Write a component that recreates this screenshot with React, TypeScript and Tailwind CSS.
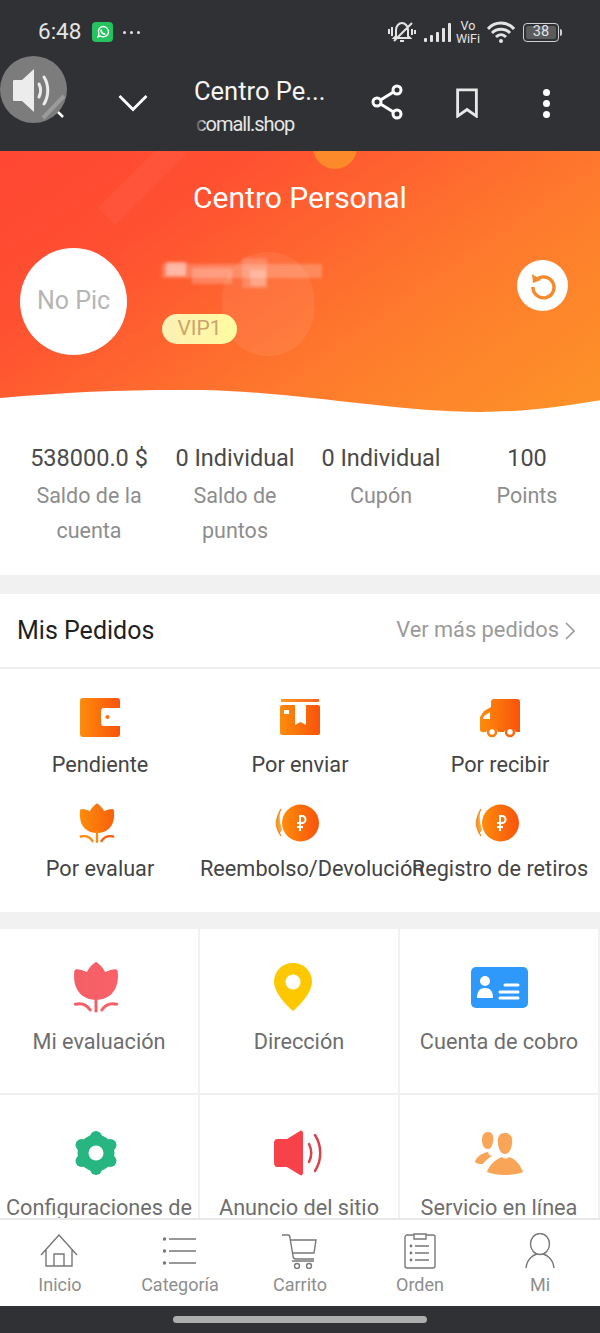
import React from "react";

const font = { fontFamily: "Roboto, 'Liberation Sans', sans-serif" };

function Grad({ id }: { id: string }) {
  return (
    <defs>
      <linearGradient id={id} x1="0" y1="0" x2="1" y2="0">
        <stop offset="0" stopColor="#fd8c0c" />
        <stop offset="1" stopColor="#f9530b" />
      </linearGradient>
    </defs>
  );
}

const TULIP = "M20 0 C23 2 26 5 28 9 C31 7.5 34 6.5 37 6.5 C38.5 6.5 39 8 39 10 C39.5 18 37.5 24 33.5 28 C30 31.5 25 33 20 33 C15 33 10 31.5 6.5 28 C2.5 24 0.5 18 1 10 C1 8 1.5 6.5 3 6.5 C6 6.5 9 7.5 12 9 C14 5 17 2 20 0 Z";

function Wallet() {
  return (
    <svg viewBox="0 0 40 40" className="w-10 h-10">
      <Grad id="g1" />
      <path fill="url(#g1)" d="M3 0 H37 a3 3 0 0 1 3 3 V10 H24 a3 3 0 0 0 -3 3 V25 a3 3 0 0 0 3 3 H40 V36 a3 3 0 0 1 -3 3 H3 a3 3 0 0 1 -3 -3 V3 a3 3 0 0 1 3 -3 Z" />
      <circle cx="27.5" cy="19" r="2" fill="#f9700b" />
    </svg>
  );
}

function Box() {
  return (
    <svg viewBox="0 0 40 40" className="w-10 h-10">
      <Grad id="g2" />
      <path fill="url(#g2)" d="M1 1 H39 V4 H1 Z" opacity="0.9" />
      <path fill="url(#g2)" fillRule="evenodd" d="M2 7 H15 V27 L20.5 24 L26 27 V7 H38 a2 2 0 0 1 2 2 V35 a2 2 0 0 1 -2 2 H2 a2 2 0 0 1 -2 -2 V9 a2 2 0 0 1 2 -2 Z M4 12 V16 H9 V12 Z" />
    </svg>
  );
}

function Truck() {
  return (
    <svg viewBox="0 0 40 40" className="w-10 h-10">
      <Grad id="g3" />
      <path fill="url(#g3)" fillRule="evenodd" d="M14 1 H37 a3 3 0 0 1 3 3 V34 H36 a6.5 6.5 0 0 0 -12 0 H18 a6.5 6.5 0 0 0 -12 0 H2 a2 2 0 0 1 -2 -2 V19 L4 13 L11 9 V4 a3 3 0 0 1 3 -3 Z M4 18 L3 21 H10 V14 Z" />
      <circle cx="12" cy="34" r="4" fill="none" stroke="#fb7d0b" strokeWidth="2.5" />
      <circle cx="30" cy="34" r="4" fill="none" stroke="#fa660b" strokeWidth="2.5" />
    </svg>
  );
}

function Tulip({ id, a, b }: { id: string; a: string; b: string }) {
  return (
    <svg viewBox="0 0 40 44" className="w-full h-full">
      <defs>
        <linearGradient id={id} x1="0" y1="0" x2="1" y2="0">
          <stop offset="0" stopColor={a} />
          <stop offset="1" stopColor={b} />
        </linearGradient>
      </defs>
      <path fill={`url(#${id})`} d={TULIP} />
      <path fill={a} d="M18.7 30 H21.3 V44 H18.7 Z" />
      <path fill="none" stroke={a} strokeWidth="2.6" strokeLinecap="round" d="M2 37 C8 35.5 12 37.5 15 42" />
      <path fill="none" stroke={b} strokeWidth="2.6" strokeLinecap="round" d="M38 37 C32 35.5 28 37.5 25 42" />
    </svg>
  );
}

function Coin({ id }: { id: string }) {
  return (
    <svg viewBox="0 0 50 40" className="w-[50px] h-10">
      <Grad id={id} />
      <path d="M5 8 C1 14 0 20 1 24 L4 31 L7 27 C5 21 4 14 5 8 Z" fill="#f5a33b" />
      <path d="M6 6 C1 15 1 25 6 33" fill="none" stroke="#f68c1c" strokeWidth="1.4" />
      <circle cx="25.5" cy="20" r="18.5" fill={`url(#${id})`} />
      <path fill="none" stroke="#fff" strokeWidth="2" d="M25 28 V13 H27 a3.2 3.2 0 0 1 0 7 H22 M22 24 H28" />
    </svg>
  );
}

function Pin() {
  return (
    <svg viewBox="0 0 38 48" className="w-[38px] h-[48px]">
      <path fill="#fdc800" fillRule="evenodd" d="M19 0 C30 0 38 8 38 19 C38 29 27 41 19 48 C11 41 0 29 0 19 C0 8 8 0 19 0 Z M19 11.5 a7.5 7.5 0 1 0 0.01 0 Z" />
    </svg>
  );
}

function IdCard() {
  return (
    <svg viewBox="0 0 57 41" className="w-[57px] h-[41px]">
      <rect width="57" height="41" rx="5" fill="#2f98fb" />
      <circle cx="14" cy="14" r="5" fill="#fff" />
      <path fill="#fff" d="M6 31 C6 24 9 21 14 21 C19 21 22 24 22 31 Z" />
      <path fill="none" stroke="#fff" strokeWidth="3" strokeLinecap="round" d="M34 18 H47 M29 25 H47 M29 31 H47" />
    </svg>
  );
}

function Gear() {
  return (
    <svg viewBox="0 0 44 44" className="w-11 h-11" fill="#27b681">
      <circle cx="22" cy="22" r="18.5" />
      <circle cx="22" cy="6" r="6" />
      <circle cx="22" cy="38" r="6" />
      <circle cx="7.5" cy="14" r="6" />
      <circle cx="36.5" cy="14" r="6" />
      <circle cx="7.5" cy="30" r="6" />
      <circle cx="36.5" cy="30" r="6" />
      <circle cx="22" cy="22" r="7.5" fill="#fff" />
    </svg>
  );
}

function Speaker() {
  return (
    <svg viewBox="0 0 52 46" className="w-[52px] h-[46px]">
      <path fill="#f7424a" d="M4 9 H14 L27 1 C28 0 30 1 30 3 V43 C30 45 28 46 27 45 L14 37 H4 C2 37 1 35 1 33 V13 C1 11 2 9 4 9 Z" />
      <path fill="none" stroke="#d8444c" strokeWidth="2.5" strokeLinecap="round" d="M36 14 C39 20 39 26 36 32" />
      <path fill="none" stroke="#d8444c" strokeWidth="2.5" strokeLinecap="round" d="M42 5 C49 16 49 30 42 41" />
    </svg>
  );
}

function People() {
  return (
    <svg viewBox="0 0 50 44" className="w-[50px] h-[44px]">
      <path fill="#f9a557" d="M14 1 C19 1 20 6 19 11 C18 15 17 18 14 18 C11 18 8 15 8 9 C8 4 10 1 14 1 Z M1 31 C2 26 8 22 14 21 C15 24 16 25 18 25 C13 28 10 31 9 33 C6 33 3 33 1 31 Z" />
      <path fill="#f9a557" d="M31 2 C37 2 39 7 38 13 C37 19 35 23 31 23 C27 23 25 19 24 13 C23 7 25 2 31 2 Z M13 41 C15 34 22 28 28 26 C30 28 33 28 35 26 C42 28 47 35 49 41 C40 45 22 45 13 41 Z" />
    </svg>
  );
}

const navStroke = { fill: "none", stroke: "#777", strokeWidth: 1.4 };

const navIcons = [
  <svg key="h" viewBox="0 0 38 34" className="w-[38px] h-[34px] mr-[3px]" {...navStroke}>
    <path d="M1 21 L19 1 L37 21 M6 16 V32 H32 V16 M14 32 V20 H24 V32" />
  </svg>,
  <svg key="c" viewBox="0 0 34 30" className="w-[34px] h-[30px]" {...navStroke}>
    <path d="M6 3 H33 M6 15 H33 M6 27 H33" />
    <circle cx="1.5" cy="3" r="1" fill="#777" />
    <circle cx="1.5" cy="15" r="1" fill="#777" />
    <circle cx="1.5" cy="27" r="1" fill="#777" />
  </svg>,
  <svg key="k" viewBox="0 0 36 36" className="w-[36px] h-[36px] mr-[3px]" {...navStroke}>
    <path d="M1 2 H7 C8 2 9 3 9 5 L12 23 C12 25 13 26 15 26 H33 M9 7 H35 L33 20 L12 20 M11 28 H33" />
    <circle cx="16" cy="33" r="2.5" />
    <circle cx="28" cy="33" r="2.5" />
  </svg>,
  <svg key="o" viewBox="0 0 32 36" className="w-[32px] h-[36px]" {...navStroke}>
    <path d="M10 2 H3 C2 2 1 3 1 4 V33 C1 34 2 35 3 35 H29 C30 35 31 34 31 33 V4 C31 3 30 2 29 2 H22 M10 1 H22 V6 H10 Z M11 13 H25 M11 20 H25 M11 27 H25" />
    <circle cx="7" cy="13" r="0.7" fill="#777" />
    <circle cx="7" cy="20" r="0.7" fill="#777" />
    <circle cx="7" cy="27" r="0.7" fill="#777" />
  </svg>,
  <svg key="m" viewBox="0 0 30 36" className="w-[30px] h-[36px]" {...navStroke}>
    <ellipse cx="15" cy="11" rx="9.5" ry="10.5" />
    <path d="M1 35 C2 26 8 22 12 21 M29 35 C28 26 22 22 18 21" />
  </svg>,
];

const stats = [
  ["538000.0 $", "Saldo de la cuenta"],
  ["0 Individual", "Saldo de puntos"],
  ["0 Individual", "Cupón"],
  ["100", "Points"],
];

const orders: [React.ReactNode, string][] = [
  [<Wallet key="1" />, "Pendiente"],
  [<Box key="2" />, "Por enviar"],
  [<Truck key="3" />, "Por recibir"],
  [<div key="4" className="w-[36px] h-10 mr-[6px]"><Tulip id="t1" a="#fd8c0c" b="#f9600b" /></div>, "Por evaluar"],
  [<Coin key="5" id="c1" />, "Reembolso/Devolución"],
  [<Coin key="6" id="c2" />, "Registro de retiros"],
];

const tools: [React.ReactNode, string][] = [
  [<div key="1" className="w-[46px] h-[52px] mr-[6px]"><Tulip id="t2" a="#f35f66" b="#fb6068" /></div>, "Mi evaluación"],
  [<div key="2" className="mr-[12px]"><Pin /></div>, "Dirección"],
  [<IdCard key="3" />, "Cuenta de cobro"],
  [<div key="4" className="mr-[6px]"><Gear /></div>, "Configuraciones de"],
  [<Speaker key="5" />, "Anuncio del sitio"],
  [<People key="6" />, "Servicio en línea"],
];

const nav = ["Inicio", "Categoría", "Carrito", "Orden", "Mi"];

export default function App() {
  return (
    <div style={font} className="relative w-[600px] h-[1333px] flex flex-col overflow-hidden bg-white">
      {/* status bar */}
      <div className="h-[52px] shrink-0 bg-[#303134] flex items-center justify-between pl-[38px] pr-[38px] pt-[12px] text-[#e4e4e4]">
        <div className="flex items-center">
          <span className="text-[22.5px] w-[54px]">6:48</span>
          <span className="w-[21px] h-[20px] rounded-[4px] bg-[#25c25f] flex items-center justify-center">
            <svg viewBox="0 0 14 14" className="w-[14px] h-[14px]" fill="none" stroke="#fff" strokeWidth="1.3">
              <path d="M2 12 L3 9 C1 5 4 1.5 7 1.5 C10 1.5 12.5 4 12.5 7 C12.5 10.5 8 13 4.5 11 Z" />
              <path d="M5 4.5 C5 7 7 9 9.5 9.3" strokeWidth="1.6" />
            </svg>
          </span>
          <span className="flex gap-[4px] ml-[10px]">
            <i className="w-[3px] h-[3px] rounded-full bg-[#e4e4e4]" />
            <i className="w-[3px] h-[3px] rounded-full bg-[#e4e4e4]" />
            <i className="w-[3px] h-[3px] rounded-full bg-[#e4e4e4]" />
          </span>
        </div>
        <div className="flex items-center">
          <svg viewBox="0 0 28 26" className="w-[28px] h-[26px]" fill="none" stroke="#e4e4e4" strokeWidth="2">
            <path d="M8 17 V11 C8 7 11 4 14 4 C17 4 20 7 20 11 V17 L22 19 H6 Z M12 22 H16 M24 4 L6 22 M1 10 V15 M4 8 V17 M24 10 V16 M27 11 V15" />
          </svg>
          <svg viewBox="0 0 28 20" className="w-[28px] h-[20px] ml-[8px]" fill="#e4e4e4">
            <rect x="0" y="16" width="3" height="4" rx="1" />
            <rect x="6" y="13" width="3" height="7" rx="1" />
            <rect x="12" y="10" width="3" height="10" rx="1" />
            <rect x="18" y="6" width="3" height="14" rx="1" />
            <rect x="24" y="1" width="3" height="19" rx="1" />
          </svg>
          <span className="ml-[2px] w-[28px] flex flex-col items-center text-[12.5px] leading-[11px] gap-[2px]">
            <span>Vo</span>
            <span>WiFi</span>
          </span>
          <svg viewBox="0 0 28 24" className="w-[28px] h-[24px] ml-[5px]" fill="none" stroke="#e4e4e4" strokeWidth="3">
            <path d="M1 9 C8 1 20 1 27 9 M5 13 C10 8 18 8 23 13 M9 17 C12 14 16 14 19 17" />
            <circle cx="14" cy="21" r="2" fill="#e4e4e4" stroke="none" />
          </svg>
          <span className="ml-[8px] w-[36px] h-[19px] rounded-[4px] border border-[#cfcfcf] flex items-center justify-center p-[2px]">
            <span className="bg-[#5a5b5d] rounded-[2px] w-full h-full flex items-center justify-center text-[14.5px] leading-none">38</span>
          </span>
          <i className="w-[2px] h-[7px] ml-[1px] rounded-r bg-[#cfcfcf]" />
        </div>
      </div>

      {/* browser bar */}
      <div className="relative h-[99px] shrink-0 bg-[#303134] flex items-center text-white">
        <svg viewBox="0 0 30 18" className="absolute left-[118px] top-[42px] w-[30px] h-[18px]" fill="none" stroke="#fff" strokeWidth="2.8">
          <path d="M1.5 2 L15 15.5 L28.5 2" />
        </svg>
        <svg viewBox="0 0 14 14" className="absolute left-[50px] top-[52px] w-[14px] h-[14px]" fill="none" stroke="#fff" strokeWidth="2.5">
          <path d="M1 1 L13 13" />
        </svg>
        <div className="absolute left-[194px] top-[20px] flex flex-col">
          <span className="text-[25.5px] leading-[38px] text-[#f5f5f5]">Centro Pe...</span>
          <span className="relative text-[20px] leading-[30px] tracking-[-1px] pl-[2px] text-[#e6e6e6] -mt-[1px]">
            comall.shop
            <i className="absolute left-0 top-0 w-[12px] h-full bg-gradient-to-r from-[#303134] to-transparent" />
          </span>
        </div>
        <svg viewBox="0 0 32 36" className="absolute left-[371px] top-[32px] w-[32px] h-[36px]" fill="none" stroke="#fff" strokeWidth="3">
          <circle cx="26" cy="6" r="4" />
          <circle cx="26" cy="30" r="4" />
          <circle cx="6" cy="18" r="4" />
          <path d="M9.5 16 L22.5 8 M9.5 20 L22.5 28" />
        </svg>
        <svg viewBox="0 0 24 32" className="absolute left-[455px] top-[36px] w-[24px] h-[30px]" fill="none" stroke="#e8e8e8" strokeWidth="3">
          <path d="M2 2 H22 V30 L12 23 L2 30 Z" />
        </svg>
        <div className="absolute left-[543px] top-[37px] flex flex-col gap-[4px]">
          <i className="w-[7px] h-[7px] rounded-full bg-white" />
          <i className="w-[7px] h-[7px] rounded-full bg-white" />
          <i className="w-[7px] h-[7px] rounded-full bg-white" />
        </div>
      </div>

      {/* floating volume bubble */}
      <div className="absolute left-0 top-[56px] w-[67px] h-[67px] rounded-full bg-[#7c7c7d] flex items-center justify-center">
        <svg viewBox="0 0 67 67" className="w-[67px] h-[67px]">
          <path fill="#ececec" d="M14 24 H22 L34 13 V56 L22 45 H14 C13 45 13 44 13 43 V26 C13 25 13 24 14 24 Z" />
          <path fill="none" stroke="#ececec" strokeWidth="3" strokeLinecap="round" d="M39 28 C41 32 41 37 39 41 M44 21 C49 29 49 40 44 48" />
          <path fill="none" stroke="#9a9a9a" strokeWidth="4" d="M43 62 L64 40" />
        </svg>
      </div>

      <div className="flex-1 min-h-0 overflow-hidden">
        {/* hero */}
        <div className="relative h-[262px] overflow-hidden bg-[linear-gradient(145deg,#ff4733_0%,#ff4f31_25%,#fe7a2d_65%,#fd9028_95%)]">
          <i className="absolute left-[313px] top-[-26px] w-[44px] h-[44px] rounded-full bg-[#fd8a2a]" />
          <i className="absolute left-[222px] top-[101px] w-[92px] h-[104px] rounded-full bg-white/[.07]" />
          <i className="absolute left-[130px] top-[-20px] w-[24px] h-[100px] rotate-[45deg] bg-white/[.04]" />
          <svg viewBox="0 0 600 60" preserveAspectRatio="none" className="absolute left-0 bottom-0 w-[600px] h-[32px]">
            <path fill="#fff" d="M0 32 C70 20 130 16 200 17 C300 20 390 58 480 58 C530 58 570 45 600 36 V60 H0 Z" />
          </svg>
          <div className="relative text-center text-white text-[30px] leading-[40px] pt-[27px]">Centro Personal</div>
          <div className="absolute left-[20px] top-[97px] w-[107px] h-[107px] rounded-full bg-white flex items-center justify-center text-[#b5b5b5] text-[25px] pb-[2px]">No Pic</div>
          <svg viewBox="0 0 160 36" className="absolute left-[162px] top-[105px] w-[160px] h-[36px] blur-[1.5px]">
            <rect x="0" y="8" width="160" height="14" fill="#fff" opacity=".22" />
            <rect x="4" y="6" width="20" height="14" fill="#fff" opacity=".45" />
            <rect x="30" y="12" width="40" height="16" fill="#fff" opacity=".22" />
            <rect x="80" y="2" width="25" height="30" fill="#fff" opacity=".18" />
            <rect x="88" y="14" width="16" height="16" fill="#fff" opacity=".25" />
          </svg>
          <div className="absolute left-[162px] top-[163px] w-[75px] h-[30px] rounded-full bg-gradient-to-r from-[#fdf0b4] to-[#fffba0] flex items-center justify-center text-[#cea36a] text-[21px]">VIP1</div>
          <div className="absolute left-[517px] top-[109px] w-[51px] h-[51px] rounded-full bg-white flex items-center justify-center">
            <svg viewBox="0 0 28 28" className="w-[28px] h-[28px]" fill="none" stroke="#f58a2c" strokeWidth="3.4">
              <path d="M7 8 A10.5 10.5 0 1 1 4 15" />
              <path d="M3 2 L4 11 L12 8" fill="#f58a2c" stroke="none" />
            </svg>
          </div>
        </div>

        {/* stats */}
        <div className="h-[162px] pl-4 grid grid-cols-4 w-[600px]">
          {stats.map(([v, l], i) => (
            <div key={i} className="w-[146px] text-center pt-[28px] px-3">
              <div className="text-[23.5px] leading-[34px] text-[#4a4a4a] whitespace-nowrap -mx-3">{v}</div>
              <div className="text-[21.5px] leading-[35px] text-[#8d8d8d] mt-[3px]">{l}</div>
            </div>
          ))}
        </div>
        <div className="h-[19px] bg-[#f1f1f1]" />

        {/* orders */}
        <div className="h-[75px] flex items-center justify-between pl-[17px] pr-[25px] border-b-2 border-[#efefef]">
          <span className="text-[25px] text-[#1f1f1f]">Mis Pedidos</span>
          <span className="flex items-center text-[21.8px] text-[#9a9a9a]">
            Ver más pedidos
            <svg viewBox="0 0 10 18" className="w-[10px] h-[18px] ml-[6px]" fill="none" stroke="#9a9a9a" strokeWidth="1.6">
              <path d="M1 1 L9 9 L1 17" />
            </svg>
          </span>
        </div>
        <div className="grid grid-cols-3 w-[600px] pt-[29px] h-[243px] grid-rows-[105px_104px]">
          {orders.map(([icon, label], i) => (
            <div key={i} className="min-w-0 text-center">
              <div className="h-10 flex justify-center">{icon}</div>
              <div className={`${i > 2 ? "mt-[9px]" : "mt-[10px]"} text-[21.7px] leading-[34px] text-[#444] whitespace-nowrap`}>{label}</div>
            </div>
          ))}
        </div>
        <div className="h-[17px] bg-[#f1f1f1]" />

        {/* tools */}
        <div className="grid grid-cols-3 w-[600px]">
          {tools.map(([icon, label], i) => (
            <div key={i} className="h-[166px] min-w-0 border-r-2 border-b-2 border-[#f1f1f1] text-center">
              <div className="h-[52px] mt-[32px] flex justify-center items-center">{icon}</div>
              <div className="mt-[12px] text-[21.7px] leading-[34px] text-[#6e6e6e] whitespace-nowrap">{label}</div>
            </div>
          ))}
        </div>
      </div>

      {/* bottom nav */}
      <div className="h-[88px] shrink-0 bg-white border-t-2 border-[#e8e8e8] grid grid-cols-5">
        {nav.map((n, i) => (
          <div key={n} className="flex flex-col items-center">
            <div className="h-[38px] mt-[12px] flex items-center justify-center">{navIcons[i]}</div>
            <span className="text-[18px] leading-[24px] mt-[3px] text-[#8e8e8e]">{n}</span>
          </div>
        ))}
      </div>
      <div className="h-[27px] shrink-0 bg-[#303134] flex items-center justify-center">
        <i className="w-[254px] h-[7px] rounded-full bg-[#adadad]" />
      </div>
    </div>
  );
}
